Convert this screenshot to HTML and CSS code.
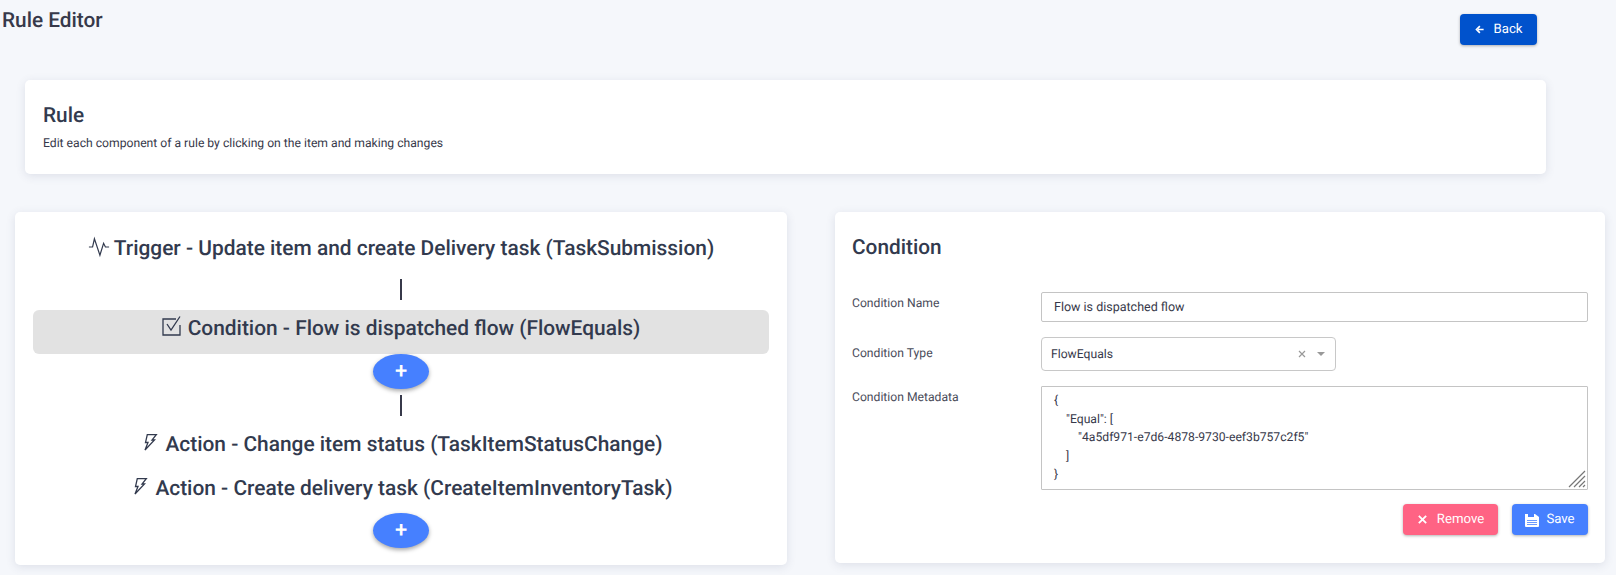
FILE: index.html
```html
<!DOCTYPE html>
<html lang="en">
<head>
    <meta charset="UTF-8">
    <title>Rule Editor</title>
    <link rel="stylesheet" href="styles.css">
</head>
<body>

<div class="topbar">
    <h1 class="page-title">Rule Editor</h1>
    <a class="btn btn-back" href="javascript:;">
        <svg class="btn-icon" viewBox="0 0 12 12"><path d="M11.500 6H4M6.500 1.500 2 6l4.500 4.500" fill="none" stroke="#fff" stroke-width="2.200"/></svg>
        Back
    </a>
</div>

<div class="card rule-card">
    <h2 class="rule-title">Rule</h2>
    <p class="rule-desc">Edit each component of a rule by clicking on the item and making changes</p>
</div>

<div class="columns">
    <div class="card flow-card">
        <div class="flow-item flow-trigger">
            <svg class="flow-icon icon-trigger" viewBox="0 0 24 24"><polyline points="1,12 5,12 7,3 13,21 17,8 19,12 23,12"/></svg>
            Trigger - Update item and create Delivery task (TaskSubmission)
        </div>
        <div class="flow-line"></div>
        <div class="flow-item flow-active">
            <svg class="flow-icon icon-condition" viewBox="0 0 20 20"><path d="M18 9v10H1V3h13"/><polyline points="5,8 9,14 18,0.500"/></svg>
            Condition - Flow is dispatched flow (FlowEquals)
        </div>
        <a class="btn-add" href="javascript:;">+</a>
        <div class="flow-line flow-line-low"></div>
        <div class="flow-item flow-action">
            <svg class="flow-icon icon-action" viewBox="0 0 14 17"><polygon points="3.300,0.600 12.500,0.400 8,6 10.500,6 1,16 4,8.500 1.500,8.500"/></svg>
            Action - Change item status (TaskItemStatusChange)
        </div>
        <div class="flow-item flow-action">
            <svg class="flow-icon icon-action" viewBox="0 0 14 17"><polygon points="3.300,0.600 12.500,0.400 8,6 10.500,6 1,16 4,8.500 1.500,8.500"/></svg>
            Action - Create delivery task (CreateItemInventoryTask)
        </div>
        <a class="btn-add btn-add-last" href="javascript:;">+</a>
    </div>

    <div class="card form-card">
        <h2 class="form-title">Condition</h2>
        <div class="form-row row-name">
            <label class="form-label">Condition Name</label>
            <div class="form-input">Flow is dispatched flow</div>
        </div>
        <div class="form-row row-type">
            <label class="form-label">Condition Type</label>
            <div class="form-select">
                <span class="select-value">FlowEquals</span>
                <svg class="select-clear" viewBox="0 0 8 8"><path d="M1 1l6 6M7 1 1 7" stroke="#999" stroke-width="1.200"/></svg>
                <span class="select-caret"></span>
            </div>
        </div>
        <div class="form-row row-meta">
            <label class="form-label">Condition Metadata</label>
            <div class="form-textarea">
<pre class="meta-text">{
    "Equal": [
        "4a5df971-e7d6-4878-9730-eef3b757c2f5"
    ]
}</pre>
                <svg class="resize-grip" viewBox="0 0 18 18"><path d="M1 17 17 1M6 17 17 6M11 17l6-6M15 17l2-2" stroke="#777" stroke-width="1.200"/></svg>
            </div>
        </div>
        <div class="form-actions">
            <a class="btn btn-remove" href="javascript:;">
                <svg class="btn-icon icon-remove" viewBox="0 0 12 12"><path d="M2 2l8 8M10 2 2 10" stroke="#fff" stroke-width="2"/></svg>
                Remove
            </a>
            <a class="btn btn-save" href="javascript:;">
                <svg class="btn-icon btn-icon-save" viewBox="0 0 14 14"><path d="M0 1h10l4 3v9a1 1 0 0 1-1 1H1a1 1 0 0 1-1-1z" fill="#fff"/><path d="M3 1h6v3H3z" fill="#4680ff"/><path d="M2 7.500h10M2 9.500h10M2 11.500h10" stroke="#4680ff" stroke-width=".8"/></svg>
                Save
            </a>
        </div>
    </div>
</div>

</body>
</html>
```
FILE: styles.css
```css
*{
    margin: 0px;
    padding: 0px;
    box-sizing: border-box;
}
body{
    height: 575px;
    overflow: hidden;
    background-color: #f5f7fb;
    color: #37394a;
    font-family: Roboto, "Liberation Sans", sans-serif;
    text-rendering: geometricPrecision;
}
.topbar{
    display: flex;
    justify-content: space-between;
    align-items: flex-start;
    height: 80px;
    padding: 9px 79px 0 2px;
}
.page-title{
    font-size: 20.800px;
    line-height: 24px;
    font-weight: 500;
}
.btn{
    display: flex;
    align-items: center;
    justify-content: center;
    height: 31px;
    border-radius: 4px;
    color: #fff;
    font-size: 13.200px;
    text-decoration: none;
    box-shadow: 0 1px 3px rgba(0,0,0,.3);
}
.btn-back{
    width: 77px;
    margin-top: 5px;
    background-color: #0052cc;
}
.btn-remove{
    width: 95px;
    background-color: #ff6384;
}
.btn-save{
    width: 76px;
    background-color: #4680ff;
}
.btn-icon{
    width: 9px;
    height: 9px;
    margin-right: 10px;
}
.icon-remove{
    width: 11px;
    height: 11px;
    margin-right: 9px;
}
.btn-icon-save{
    width: 14px;
    height: 14px;
    margin-right: 7px;
}
.card{
    background-color: #fff;
    border-radius: 5px;
    box-shadow: 0 2px 10px rgba(60,70,110,.13);
}
.rule-card{
    width: 1521px;
    height: 94px;
    margin-left: 25px;
    padding: 24px 18px 0;
}
.rule-title{
    font-size: 20.800px;
    line-height: 24px;
    font-weight: 500;
    color: #323a4e;
}
.rule-desc{
    margin-top: 7px;
    font-size: 12.160px;
    line-height: 16px;
}
.columns{
    display: flex;
    align-items: flex-start;
    gap: 48px;
    margin: 38px 0 0 15px;
}
.flow-card{
    display: flex;
    flex-direction: column;
    align-items: center;
    width: 772px;
    height: 353px;
    padding: 19px 18px 0;
}
.flow-item{
    display: flex;
    align-items: center;
    justify-content: center;
    align-self: stretch;
    height: 36px;
    font-size: 20.900px;
    font-weight: 500;
    color: #323a4e;
}
.flow-icon{
    fill: none;
    stroke: #323a4e;
    stroke-width: 1.300;
}
.icon-trigger{
    width: 22px;
    height: 22px;
    margin: -4px 4px 0 0;
}
.icon-condition{
    width: 20px;
    height: 20px;
    margin: -6px 6px 0 0;
}
.icon-action{
    width: 14px;
    height: 17px;
    margin: -5px 7px 0 0;
}
.flow-line{
    width: 2px;
    height: 21px;
    margin: 12px 0 10px;
    background-color: #37394a;
}
.flow-line-low{
    margin: 6px 0 7px;
}
.flow-active{
    height: 44px;
    padding-bottom: 6px;
    border-radius: 6px;
    background-color: #e2e2e2;
}
.flow-action{
    height: 44px;
    padding-left: 5px;
}
.btn-add{
    display: flex;
    align-items: center;
    justify-content: center;
    flex-shrink: 0;
    width: 56px;
    height: 35px;
    border-radius: 50%;
    background-color: #4680ff;
    color: #fff;
    font-size: 22px;
    font-weight: 500;
    line-height: 1;
    text-decoration: none;
    box-shadow: 0 2px 4px rgba(0,0,0,.35);
}
.btn-add-last{
    margin-top: 2px;
}
.form-card{
    position: relative;
    width: 770px;
    height: 351px;
    padding: 24px 17px 0;
}
.form-title{
    font-size: 20.800px;
    line-height: 24px;
    font-weight: 500;
    color: #323a4e;
}
.form-row{
    display: flex;
    align-items: flex-start;
}
.row-name{
    margin-top: 32px;
}
.row-type{
    margin-top: 15px;
}
.row-meta{
    margin-top: 15px;
}
.form-label{
    width: 189px;
    font-size: 12.160px;
    line-height: 16px;
    color: #4a4c5a;
}
.row-name .form-label{
    padding-top: 3px;
}
.row-type .form-label{
    padding-top: 8px;
}
.row-meta .form-label{
    padding-top: 3px;
}
.form-input{
    display: flex;
    align-items: center;
    width: 547px;
    height: 30px;
    padding-left: 12px;
    border: 1px solid #c4c4c4;
    border-radius: 2px;
    font-size: 12.500px;
    color: #37394a;
}
.form-select{
    display: flex;
    align-items: center;
    width: 295px;
    height: 34px;
    padding: 0 10px 0 9px;
    border: 1px solid #c8c8c8;
    border-radius: 4px;
    font-size: 12.160px;
}
.select-value{
    flex: 1;
}
.select-clear{
    width: 8px;
    height: 8px;
    margin-right: 11px;
}
.select-caret{
    width: 0;
    height: 0;
    border-left: 4px solid transparent;
    border-right: 4px solid transparent;
    border-top: 4px solid #999;
}
.form-textarea{
    position: relative;
    width: 547px;
    height: 104px;
    padding: 4px 12px;
    border: 1px solid #c4c4c4;
    border-radius: 1px;
}
.meta-text{
    font-family: Roboto, "Liberation Sans", sans-serif;
    font-size: 12.160px;
    line-height: 18.500px;
    color: #37394a;
}
.resize-grip{
    position: absolute;
    right: 1px;
    bottom: 1px;
    width: 18px;
    height: 18px;
}
.form-actions{
    display: flex;
    justify-content: flex-end;
    gap: 14px;
    margin-top: 14px;
}
```
